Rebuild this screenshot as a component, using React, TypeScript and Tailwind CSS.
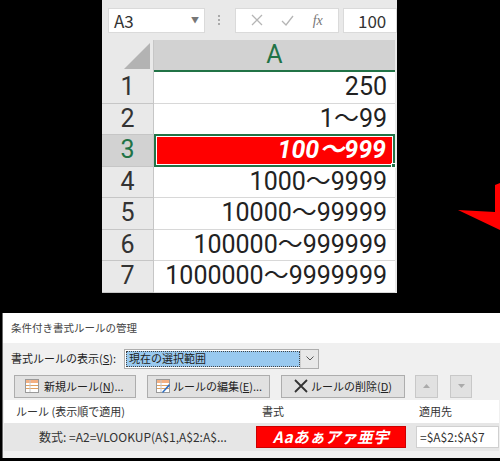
import React from "react";

const rows = [
  { n: 1, v: "250" },
  { n: 2, v: "1～99" },
  { n: 3, v: "100～999", hot: true },
  { n: 4, v: "1000～9999" },
  { n: 5, v: "10000～99999" },
  { n: 6, v: "100000～999999" },
  { n: 7, v: "1000000～9999999" },
];

const jp = { fontFamily: '"Noto Sans CJK JP", "Noto Sans", sans-serif' };
const cell = { fontFamily: 'Roboto, "Noto Sans CJK JP", sans-serif' };

function RuleIcon({ pencil }: { pencil?: boolean }) {
  return (
    <svg width="14" height="14" viewBox="0 0 14 14" className="shrink-0">
      <rect x="0.5" y="0.5" width="13" height="13" fill="#fff" stroke="#9a9a9a" />
      <rect x="1" y="1" width="12" height="3" fill="#f4b183" />
      <line x1="1" y1="6.5" x2="13" y2="6.5" stroke="#e0a060" />
      <line x1="1" y1="9.5" x2="13" y2="9.5" stroke="#e0a060" />
      <line x1="5" y1="1" x2="5" y2="13" stroke="#c8c8c8" />
      {pencil && <path d="M6 13 L13 5 L14 6.5 L7 14 Z" fill="#2f6fc2" />}
    </svg>
  );
}

export default function App() {
  return (
    <div className="relative w-[500px] h-[461px] bg-black overflow-hidden" style={jp}>
      {/* spreadsheet capture */}
      <div className="ml-[102px] w-[295px] h-[293px] bg-[#e9e9e9] flex flex-col">
        <div className="h-[40px] flex items-center">
          <div className="ml-[6px] w-[97px] h-[25px] bg-white border border-[#dadada] flex items-center justify-between px-[5px]">
            <span className="text-[17px] text-[#333] leading-none">A3</span>
            <span className="text-[8px] text-[#777]">▼</span>
          </div>
          <div className="ml-[13px] flex flex-col gap-[2px]">
            <span className="w-[2px] h-[2px] bg-[#aaa]" />
            <span className="w-[2px] h-[2px] bg-[#aaa]" />
            <span className="w-[2px] h-[2px] bg-[#aaa]" />
          </div>
          <div className="ml-[15px] w-[104px] h-[25px] bg-white border border-[#dadada] flex items-center justify-around px-[6px]">
            <svg width="12" height="12" viewBox="0 0 12 12"><path d="M1 1 L11 11 M11 1 L1 11" stroke="#b5b5b5" strokeWidth="1.3" /></svg>
            <svg width="13" height="11" viewBox="0 0 13 11"><path d="M1 6 L5 10 L12 1" stroke="#b5b5b5" strokeWidth="1.3" fill="none" /></svg>
            <span className="text-[14px] italic text-[#777]" style={{ fontFamily: '"Liberation Serif", serif' }}>fx</span>
          </div>
          <div className="ml-[4px] flex-1 h-[25px] bg-white border border-[#dadada] flex items-center pl-[14px]">
            <span className="text-[17px] text-[#333] leading-none">100</span>
          </div>
        </div>
        <div className="flex h-[32px]" style={cell}>
          <div className="w-[52px] relative border-r border-[#c6c6c6]">
            <svg width="26" height="26" viewBox="0 0 26 26" className="absolute right-[3px] bottom-[3px]">
              <polygon points="26,0 26,26 0,26" fill="#b3b3b3" />
            </svg>
          </div>
          <div className="w-[241px] bg-[#d2d2d2] border-b-2 border-[#217346] flex items-center justify-center">
            <span className="text-[25px] text-[#217346] leading-[28px]">A</span>
          </div>
        </div>
        {rows.map((r) => (
          <div key={r.n} className="flex h-[31.5px]" style={cell}>
            <div
              className={`w-[52px] border-r border-b border-[#c6c6c6] flex items-center justify-center text-[25px] leading-[28px] ${
                r.hot ? "bg-[#d2d2d2] text-[#217346]" : "text-[#333]"
              }`}
            >
              {r.n}
            </div>
            <div className="w-[241px] bg-white border-b border-[#d8d8d8] relative">
              {r.hot ? (
                <div className="absolute inset-[-1px_0_-1px_0] border-2 border-[#217346] flex items-center justify-end pr-[7px]">
                  <div className="absolute inset-[1px] bg-[#ff0000]" />
                  <span className="relative text-[25px] italic font-bold text-white leading-[28px]">{r.v}</span>
                  <span className="absolute right-[-3px] bottom-[-3px] w-[5px] h-[5px] bg-[#217346] border border-white" />
                </div>
              ) : (
                <div className="h-full flex items-center justify-end pr-[8px] text-[25px] text-[#222] leading-[28px] whitespace-nowrap">{r.v}</div>
              )}
            </div>
          </div>
        ))}
      </div>

      {/* red arrow tip */}
      <svg width="50" height="60" viewBox="0 0 50 60" className="absolute left-[450px] top-[178px]">
        <polygon points="8,32 45,34 45,7 50,5 50,52" fill="#ff0000" />
      </svg>

      {/* dialog */}
      <div className="mt-[20px] ml-[2px] w-[498px] h-[145px] bg-[#f0f0f0] border-l border-[#6d6d6d] text-[#222] flex flex-col">
        <div className="h-[30px] bg-white flex items-center pl-[8px] text-[10.5px] text-[#444]">条件付き書式ルールの管理</div>
        <div className="flex items-center h-[29px] pl-[8px] pt-[2px]">
          <span className="text-[11px]">
            書式ルールの表示(<span className="underline">S</span>):
          </span>
          <div className="ml-[8px] w-[195px] h-[20px] bg-white border border-[#adadad] flex items-center">
            <div className="ml-[1px] w-[174px] h-[16px] bg-[#99c9ef] border border-dotted border-[#444] flex items-center pl-[2px] text-[11px] leading-none">
              現在の選択範囲
            </div>
            <div className="flex-1 h-full border-l border-[#d0d0d0] bg-[#e8e8e8] flex items-center justify-center">
              <svg width="8" height="5" viewBox="0 0 8 5"><path d="M0.5 0.5 L4 4 L7.5 0.5" stroke="#555" fill="none" /></svg>
            </div>
          </div>
        </div>
        <div className="flex items-center h-[28px] pl-[11px] text-[11px] whitespace-nowrap">
          <div className="w-[122px] h-[23px] bg-[#e1e1e1] border border-[#adadad] flex items-center gap-[5px] pl-[10px]">
            <RuleIcon />
            <span>
              新規ルール(<span className="underline">N</span>)...
            </span>
          </div>
          <div className="ml-[11px] w-[123px] h-[23px] bg-[#e1e1e1] border border-[#adadad] flex items-center gap-[3px] pl-[8px]">
            <RuleIcon pencil />
            <span>
              ルールの編集(<span className="underline">E</span>)...
            </span>
          </div>
          <div className="ml-[11px] w-[124px] h-[23px] bg-[#e1e1e1] border border-[#adadad] flex items-center gap-[3px] pl-[12px]">
            <svg width="14" height="14" viewBox="0 0 14 14"><path d="M1 1 L13 13 M13 1 L1 13" stroke="#333" strokeWidth="1.8" /></svg>
            <span>
              ルールの削除(<span className="underline">D</span>)
            </span>
          </div>
          <div className="ml-[10px] w-[23px] h-[23px] bg-[#e1e1e1] border border-[#c8c8c8] flex items-center justify-center">
            <svg width="7" height="4" viewBox="0 0 7 4"><polygon points="0,4 7,4 3.5,0" fill="#aaa" /></svg>
          </div>
          <div className="ml-[12px] w-[22px] h-[23px] bg-[#e1e1e1] border border-[#c8c8c8] flex items-center justify-center">
            <svg width="7" height="4" viewBox="0 0 7 4"><polygon points="0,0 7,0 3.5,4" fill="#aaa" /></svg>
          </div>
        </div>
        <div className="mx-[1px] flex flex-col flex-1">
          <div className="h-[23px] bg-white flex items-center text-[11px] text-[#333]">
            <div className="w-[253px] pl-[12px]">ルール (表示順で適用)</div>
            <div className="w-[157px] pl-[5px]">書式</div>
            <div className="pl-[5px]">適用先</div>
          </div>
          <div className="h-[28px] bg-[#e6e6e6] flex items-center text-[12px] whitespace-nowrap">
            <div className="w-[252px] pl-[35px] text-[#333]">数式: =A2=VLOOKUP(A$1,A$2:A$...</div>
            <div className="w-[150px] h-[22px] bg-[#ff0000] border border-[#c00] flex items-center justify-center text-white font-bold italic text-[15.5px] leading-none tracking-[0.5px]">
              Aaあぁアァ亜宇
            </div>
            <div className="ml-[10px] flex-1 h-[22px] bg-white border border-[#d0d0d0] flex items-center pl-[3px] text-[#333]">=$A$2:$A$7</div>
          </div>
          <div className="flex-1 bg-[#f0f0f0]" />
        </div>
      </div>
    </div>
  );
}
